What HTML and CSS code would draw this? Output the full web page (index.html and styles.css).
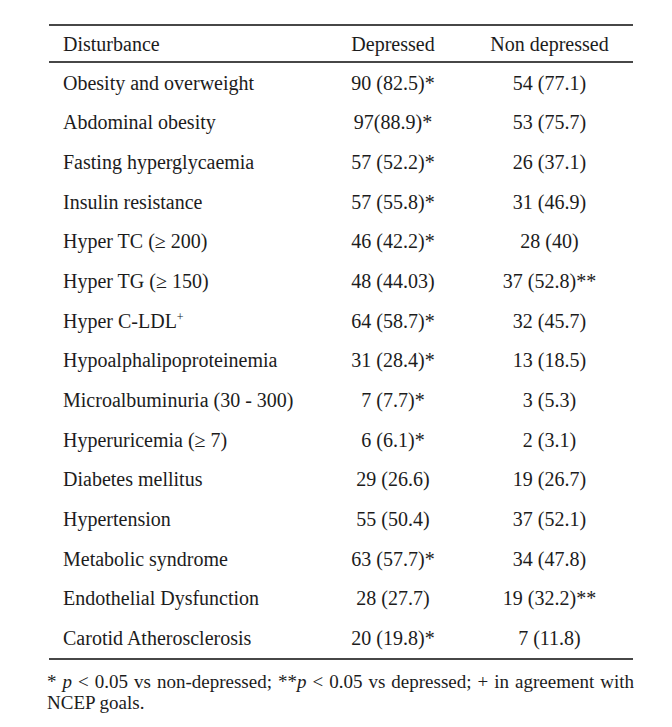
FILE: index.html
```html
<!DOCTYPE html>
<html lang="en">
<head>
<meta charset="utf-8">
<title>Disturbances table</title>
<link rel="stylesheet" href="styles.css">
</head>
<body>
<div class="page">
  <table class="data">
    <colgroup>
      <col class="c1"><col class="c2"><col class="c3">
    </colgroup>
    <thead>
      <tr><th class="name">Disturbance</th><th>Depressed</th><th>Non depressed</th></tr>
    </thead>
    <tbody>
      <tr><td class="name">Obesity and overweight</td><td>90 (82.5)*</td><td>54 (77.1)</td></tr>
      <tr><td class="name">Abdominal obesity</td><td>97(88.9)*</td><td>53 (75.7)</td></tr>
      <tr><td class="name">Fasting hyperglycaemia</td><td>57 (52.2)*</td><td>26 (37.1)</td></tr>
      <tr><td class="name">Insulin resistance</td><td>57 (55.8)*</td><td>31 (46.9)</td></tr>
      <tr><td class="name">Hyper TC (&ge; 200)</td><td>46 (42.2)*</td><td>28 (40)</td></tr>
      <tr><td class="name">Hyper TG (&ge; 150)</td><td>48 (44.03)</td><td>37 (52.8)**</td></tr>
      <tr><td class="name">Hyper C-LDL<sup class="plus">+</sup></td><td>64 (58.7)*</td><td>32 (45.7)</td></tr>
      <tr><td class="name">Hypoalphalipoproteinemia</td><td>31 (28.4)*</td><td>13 (18.5)</td></tr>
      <tr><td class="name">Microalbuminuria (30 - 300)</td><td>7 (7.7)*</td><td>3 (5.3)</td></tr>
      <tr><td class="name">Hyperuricemia (&ge; 7)</td><td>6 (6.1)*</td><td>2 (3.1)</td></tr>
      <tr><td class="name">Diabetes mellitus</td><td>29 (26.6)</td><td>19 (26.7)</td></tr>
      <tr><td class="name">Hypertension</td><td>55 (50.4)</td><td>37 (52.1)</td></tr>
      <tr><td class="name">Metabolic syndrome</td><td>63 (57.7)*</td><td>34 (47.8)</td></tr>
      <tr><td class="name">Endothelial Dysfunction</td><td>28 (27.7)</td><td>19 (32.2)**</td></tr>
      <tr class="last"><td class="name">Carotid Atherosclerosis</td><td>20 (19.8)*</td><td>7 (11.8)</td></tr>
    </tbody>
  </table>
  <p class="note">* <i>p</i> &lt; 0.05 vs non-depressed; **<i>p</i> &lt; 0.05 vs depressed; + in agreement with NCEP goals.</p>
</div>
</body>
</html>
```
FILE: styles.css
```css
html, body {
  margin: 0;
  padding: 0;
  background: #ffffff;
}

body {
  font-family: "Liberation Serif", "Times New Roman", serif;
  color: #1c1c1c;
}

.page {
  width: 672px;
  height: 727px;
  padding-top: 24px;
  box-sizing: border-box;
}

.data {
  margin-left: 49px;
  width: 584px;
  table-layout: fixed;
  border-collapse: separate;
  border-spacing: 0;
  font-size: 20px;
}

.c1 { width: 271px; }
.c2 { width: 146px; }
.c3 { width: 167px; }

.data th,
.data td {
  padding: 0;
  text-align: center;
  font-weight: normal;
  vertical-align: middle;
  line-height: 22px;
  white-space: nowrap;
}

.data th {
  height: 35px;
  border-top: 2px solid #474747;
  border-bottom: 2px solid #474747;
}

.data td {
  height: 39.67px;
}

.data tr.last td {
  border-bottom: 2px solid #474747;
}

.data .name {
  text-align: left;
  padding-left: 14px;
}

.plus {
  font-size: 12px;
  line-height: 0;
  vertical-align: 7px;
}

.note {
  margin: 11px 0 0 47px;
  width: 587px;
  font-size: 19px;
  line-height: 21px;
  text-align: justify;
}
```
